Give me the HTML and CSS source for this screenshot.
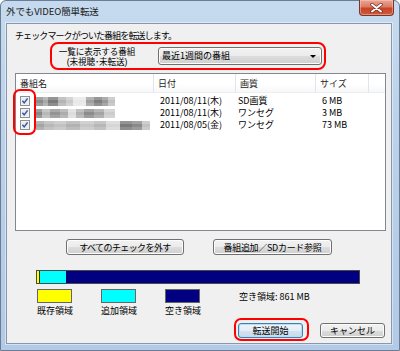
FILE: index.html
```html
<!DOCTYPE html>
<html lang="ja">
<head>
<meta charset="utf-8">
<title>外でもVIDEO簡単転送</title>
<link rel="stylesheet" href="styles.css">
</head>
<body>
<div class="window">
  <div class="titlebar">
    <span class="title">外でもVIDEO簡単転送</span>
    <span class="close">
      <svg width="13" height="10" viewBox="0 0 13 10"><path d="M2 1.5 L11 8.5 M11 1.5 L2 8.5" stroke="#6b2a20" stroke-width="3.4" stroke-linecap="round"/><path d="M2 1.5 L11 8.5 M11 1.5 L2 8.5" stroke="#ffffff" stroke-width="2" stroke-linecap="round"/></svg>
    </span>
  </div>
  <div class="client">
    <p class="intro">チェックマークがついた番組を転送します。</p>
    <div class="filter">
      <div class="filter-label"><span class="fl-line">一覧に表示する番組</span><span class="fl-line">(未視聴･未転送)</span></div>
      <div class="combo"><span>最近1週間の番組</span><span class="arrow"></span></div>
    </div>
    <div class="list">
      <div class="list-head">
        <div class="hcell">番組名</div>
        <div class="hcell">日付</div>
        <div class="hcell">画質</div>
        <div class="hcell">サイズ</div>
        <div class="hcell filler"></div>
      </div>
      <div class="row">
        <div class="cell name"><span class="check"><svg width="10" height="10" viewBox="0 0 10 10"><rect x="0.5" y="0.5" width="9" height="9" fill="#f6f6f6" stroke="#8e8f8f"/><rect x="1.5" y="1.5" width="7" height="7" fill="#e9ecf0"/><path d="M2.4 4.8 L4.2 6.9 L7.6 2.4" fill="none" stroke="#3a55a0" stroke-width="1.5"/></svg></span><span class="blur b1"></span></div>
        <div class="cell">2011/08/11(木)</div>
        <div class="cell q">SD画質</div>
        <div class="cell">6 MB</div>
      </div>
      <div class="row">
        <div class="cell name"><span class="check"><svg width="10" height="10" viewBox="0 0 10 10"><rect x="0.5" y="0.5" width="9" height="9" fill="#f6f6f6" stroke="#8e8f8f"/><rect x="1.5" y="1.5" width="7" height="7" fill="#e9ecf0"/><path d="M2.4 4.8 L4.2 6.9 L7.6 2.4" fill="none" stroke="#3a55a0" stroke-width="1.5"/></svg></span><span class="blur b2"></span></div>
        <div class="cell">2011/08/11(木)</div>
        <div class="cell q">ワンセグ</div>
        <div class="cell">3 MB</div>
      </div>
      <div class="row">
        <div class="cell name"><span class="check"><svg width="10" height="10" viewBox="0 0 10 10"><rect x="0.5" y="0.5" width="9" height="9" fill="#f6f6f6" stroke="#8e8f8f"/><rect x="1.5" y="1.5" width="7" height="7" fill="#e9ecf0"/><path d="M2.4 4.8 L4.2 6.9 L7.6 2.4" fill="none" stroke="#3a55a0" stroke-width="1.5"/></svg></span><span class="blur b3"></span></div>
        <div class="cell">2011/08/05(金)</div>
        <div class="cell q">ワンセグ</div>
        <div class="cell">73 MB</div>
      </div>
      <div class="mark-checks"></div>
    </div>
    <div class="actions">
      <button class="btn btn-a">すべてのチェックを外す</button>
      <button class="btn btn-b">番組追加／SDカード参照</button>
    </div>
    <div class="usage">
      <span class="seg existing"></span><span class="seg added"></span><span class="seg free"></span>
    </div>
    <div class="legend-row">
      <div class="legend"><span class="swatch yellow"></span><span class="legend-text">既存領域</span></div>
      <div class="legend"><span class="swatch cyan"></span><span class="legend-text">追加領域</span></div>
      <div class="legend"><span class="swatch navy"></span><span class="legend-text">空き領域</span></div>
      <div class="free-text">空き領域: 861 MB</div>
    </div>
    <div class="footer">
      <span class="mark-btn"><button class="btn btn-default">転送開始</button></span>
      <button class="btn btn-cancel">キャンセル</button>
    </div>
  </div>
</div>
</body>
</html>
```

FILE: styles.css
```css
* { box-sizing: border-box; }
html, body { margin: 0; padding: 0; }
body {
  width: 400px;
  height: 351px;
  overflow: hidden;
  font-family: "Noto Sans CJK JP", "Noto Sans", sans-serif;
  font-size: 9px;
  color: #000;
  background: #ffffff;
}
.window {
  width: 400px;
  height: 351px;
  border: 1px solid #6b7d94;
  border-radius: 6px 6px 0 0;
  padding: 0 7px 6px 5px;
  background: linear-gradient(180deg, #c6daef 0%, #bcd2ea 35%, #b6cde8 70%, #b2cae6 100%);
  display: flex;
  flex-direction: column;
}
.titlebar {
  height: 22px;
  display: flex;
  align-items: flex-start;
}
.title {
  font-size: 9.5px;
  line-height: 21px;
  color: #1a1a1a;
  letter-spacing: -0.1px;
}
.close {
  margin-left: auto;
  margin-top: -1px;
  margin-right: -2px;
  width: 35px;
  height: 16px;
  border: 1px solid #7a3429;
  border-top: none;
  border-radius: 0 0 4px 4px;
  background: linear-gradient(180deg, #e9a797 0%, #dc7b63 45%, #c84328 55%, #cf5a3c 100%);
  box-shadow: inset 0 0 0 1px rgba(255, 210, 200, 0.45);
  display: flex;
  align-items: center;
  justify-content: center;
}
.client {
  flex: 1;
  background: #f0f0f0;
  border: 1px solid #8798ae;
  box-shadow: 0 0 0 1px rgba(255, 255, 255, 0.45);
  padding-left: 8px;
  display: flex;
  flex-direction: column;
}
.intro {
  margin: 0;
  padding-top: 6px;
  line-height: 11px;
  letter-spacing: -0.9px;
}
.filter {
  margin-top: 1px;
  margin-left: 35px;
  width: 276px;
  height: 28px;
  border: 2px solid #f00;
  border-radius: 8px;
  padding: 0 1px 0 5px;
  display: flex;
  align-items: flex-start;
}
.filter-label {
  width: 80px;
  margin-top: 3px;
  display: flex;
  flex-direction: column;
  align-items: center;
  font-family: "Liberation Sans", "Noto Sans CJK JP", sans-serif;
  font-size: 8.6px;
  letter-spacing: -0.1px;
}
.fl-line {
  display: block;
  line-height: 10px;
  height: 10px;
  white-space: nowrap;
}
.combo {
  margin-left: 21px;
  margin-top: 3px;
  width: 164px;
  height: 18px;
  border: 1px solid #707070;
  border-radius: 3px;
  background: linear-gradient(180deg, #f2f2f2 0%, #ebebeb 50%, #dddddd 50%, #cfcfcf 100%);
  box-shadow: inset 0 0 0 1px #fbfbfb;
  padding-left: 3px;
  line-height: 16px;
  display: flex;
  align-items: center;
}
.arrow {
  margin-left: auto;
  margin-right: 5px;
  width: 0;
  height: 0;
  border-left: 3px solid transparent;
  border-right: 3px solid transparent;
  border-top: 3px solid #000;
}
.list {
  position: relative;
  margin-top: 3px;
  width: 371px;
  height: 158px;
  border: 1px solid #828790;
  background: #fff;
}
.list-head, .row {
  display: grid;
  grid-template-columns: 138px 82px 80px 53px 1fr;
}
.list-head {
  height: 19px;
  margin-bottom: 2px;
  background: linear-gradient(180deg, #ffffff 0%, #ffffff 55%, #f6f7f8 100%);
  border-bottom: 1px solid #eceef1;
}
.hcell {
  border-right: 1px solid #e2e4e7;
  padding-left: 4px;
  padding-top: 1px;
  line-height: 18px;
  color: #1e1e1e;
}
.hcell.filler { border-right: none; }
.row { height: 12px; line-height: 12px; }
.cell { padding-left: 6px; white-space: nowrap; }
.cell.q { padding-left: 2px; }
.cell.name {
  padding-left: 4px;
  display: flex;
  align-items: center;
}
.check { width: 10px; height: 10px; display: block; }
.check svg { display: block; }
.blur {
  display: block;
  height: 9px;
  margin-left: 6px;
  filter: blur(0.6px);
}
.b1 {
  width: 79px;
  background:
    linear-gradient(180deg, rgba(255,255,255,0.2) 0 3px, rgba(255,255,255,0) 3px 6px, rgba(255,255,255,0.15) 6px),
    linear-gradient(90deg, #8c8c8c 0 7px, #a8a8a8 7px 12px, #7a7a7a 12px 22px, #b4b4b4 22px 30px, #cacaca 30px 37px, #e8e8e8 37px 50px, #a0a0a0 50px 58px, #7e7e7e 58px 66px, #989898 66px 72px, #c2c2c2 72px);
}
.b2 {
  width: 79px;
  background:
    linear-gradient(180deg, rgba(255,255,255,0.2) 0 3px, rgba(255,255,255,0) 3px 6px, rgba(255,255,255,0.15) 6px),
    linear-gradient(90deg, #888888 0 6px, #b8b8b8 6px 14px, #949494 14px 24px, #acacac 24px 32px, #dcdcdc 32px 40px, #b0b0b0 40px 48px, #8c8c8c 48px 58px, #a4a4a4 58px 68px, #cccccc 68px);
}
.b3 {
  width: 114px;
  background:
    linear-gradient(180deg, rgba(255,255,255,0.2) 0 3px, rgba(255,255,255,0) 3px 6px, rgba(255,255,255,0.15) 6px),
    linear-gradient(90deg, #a4a4a4 0 8px, #b8b8b8 8px 18px, #c2c2c2 18px 30px, #b2b2b2 30px 44px, #c6c6c6 44px 58px, #b8b8b8 58px 70px, #d6d6d6 70px 84px, #7a7a7a 84px 96px, #8a8a8a 96px 106px, #c2c2c2 106px);
}
.mark-checks {
  position: absolute;
  left: -3px;
  top: 15px;
  width: 23px;
  height: 46px;
  border: 2px solid #f00;
  border-radius: 7px;
}
.btn {
  font-family: inherit;
  font-size: 9px;
  color: #000;
  padding: 0;
  border: 1px solid #707070;
  border-radius: 3px;
  background: linear-gradient(180deg, #f2f2f2 0%, #ebebeb 50%, #dddddd 50%, #cfcfcf 100%);
  box-shadow: inset 0 0 0 1px #fcfcfc;
  line-height: 13px;
  white-space: nowrap;
}
.actions {
  margin-top: 8px;
  padding-left: 51px;
  display: flex;
  gap: 29px;
}
.btn-a { width: 118px; height: 16px; letter-spacing: -0.6px; }
.btn-b { width: 119px; height: 16px; letter-spacing: -0.3px; }
.usage {
  margin-top: 15px;
  margin-left: 21px;
  width: 324px;
  height: 14px;
  border: 1px solid #4a4a4a;
  display: flex;
}
.seg { display: block; height: 100%; }
.existing { width: 3px; background: #ffff00; border-right: 1px solid #333; }
.added { width: 26px; background: #00ffff; }
.free { flex: 1; background: #000080; }
.legend-row {
  margin-top: 5px;
  margin-left: 22px;
  display: flex;
  align-items: flex-start;
}
.legend {
  display: flex;
  flex-direction: column;
  width: 35px;
  margin-right: 29px;
}
.legend:nth-child(3) { margin-right: 0; }
.swatch {
  display: block;
  width: 35px;
  height: 14px;
  border: 1px solid #666;
}
.yellow { background: #ffff00; }
.cyan { background: #00ffff; }
.navy { background: #000080; }
.legend-text {
  margin-top: 2px;
  line-height: 11px;
  white-space: nowrap;
}
.free-text {
  margin-left: 39px;
  margin-top: 2px;
  line-height: 11px;
  white-space: nowrap;
}
.footer {
  margin-top: 2px;
  padding-right: 6px;
  display: flex;
  justify-content: flex-end;
  align-items: flex-start;
  gap: 11px;
}
.mark-btn {
  display: block;
  border: 2px solid #f00;
  border-radius: 7px;
  padding: 3px 4px 1px 2px;
}
.mark-btn .btn { display: block; }
.btn-default {
  width: 65px;
  height: 15px;
  border-color: #3c7fb1;
  background: linear-gradient(180deg, #eef5fa 0%, #e4eef6 50%, #d2e3f0 50%, #c7dbeb 100%);
  box-shadow: inset 0 0 0 1px #b7def5;
}
.btn-cancel {
  width: 65px;
  height: 15px;
  margin-top: 5px;
}
```
